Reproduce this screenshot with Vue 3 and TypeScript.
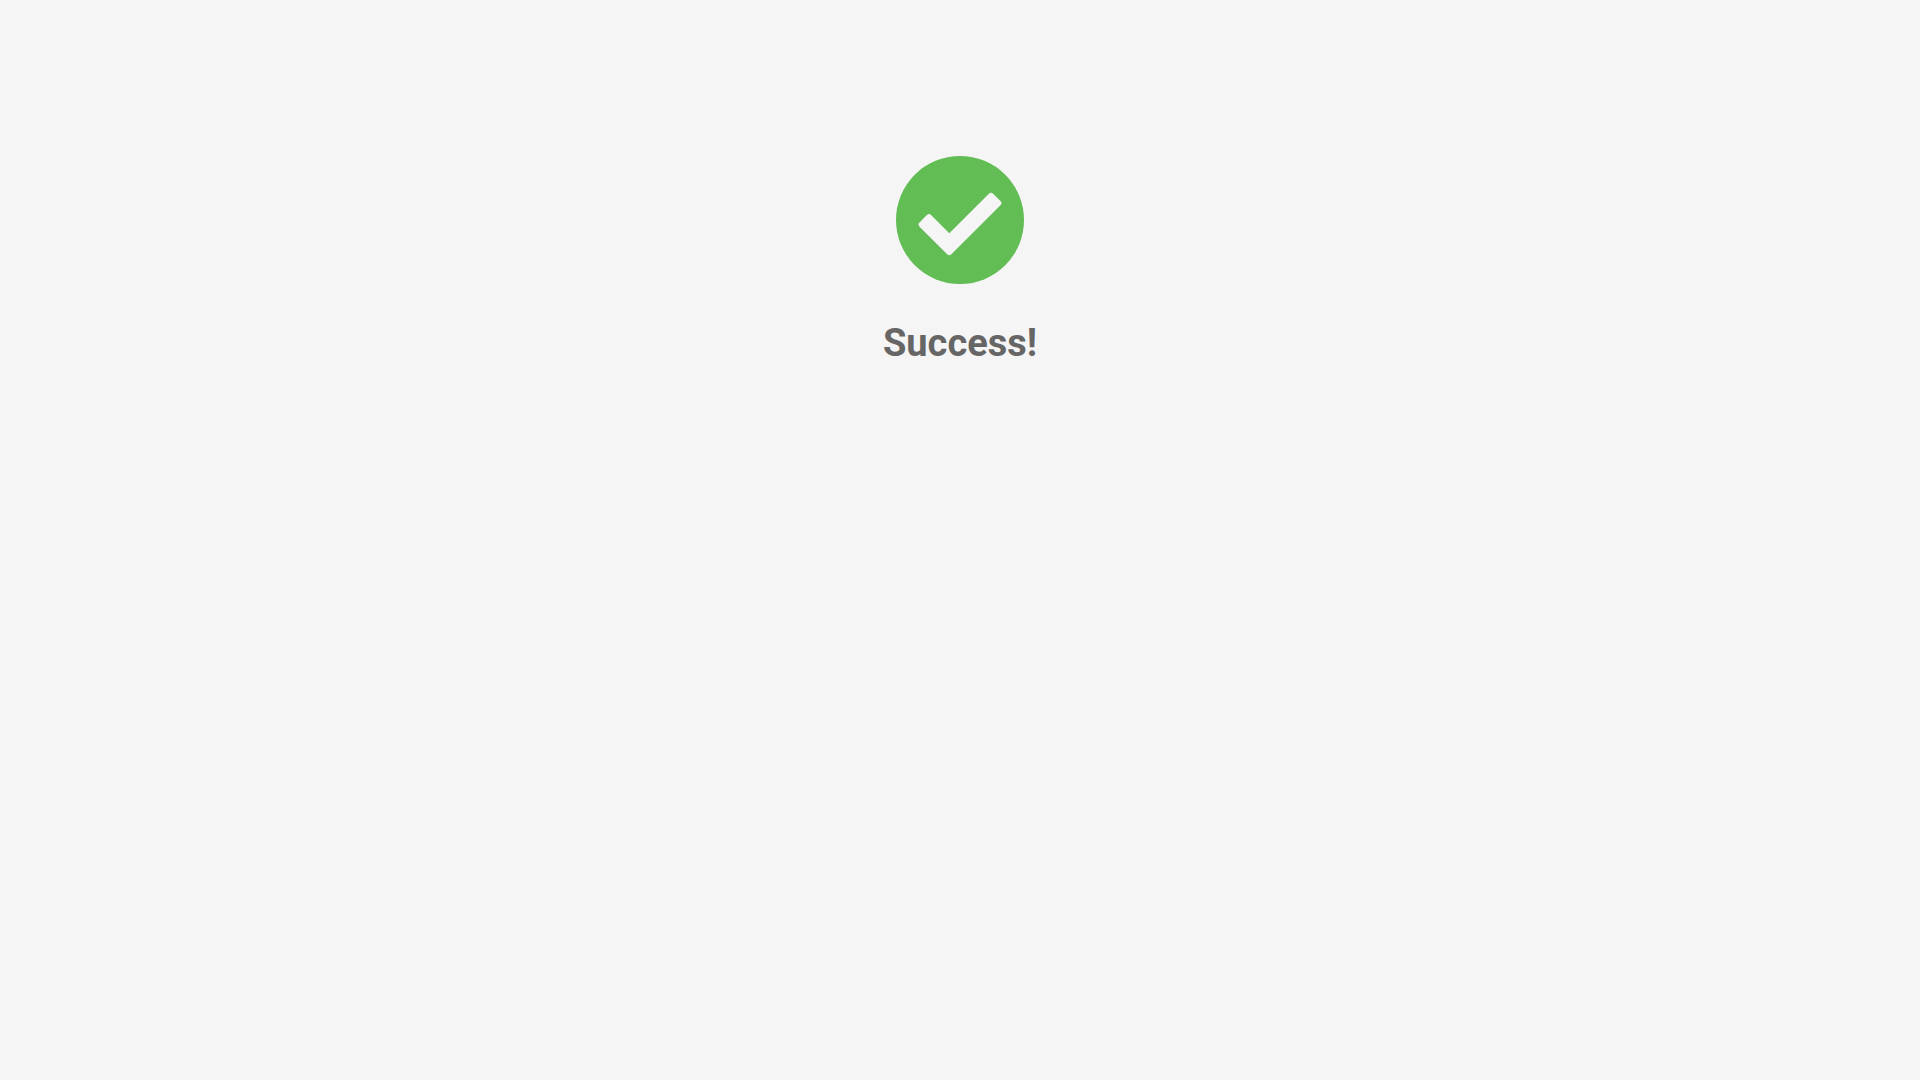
<script setup lang="ts">
const title: string = 'Success!'
</script>

<template>
  <main class="page">
    <svg class="icon" width="128" height="128" viewBox="0 0 128 128" aria-hidden="true">
      <circle cx="64" cy="64" r="64" fill="#62bd55" />
      <path
        d="M23.55 66.45 L30.9 59.1 Q33 57 35.1 59.1 L53.3 77.3 L92.9 37.7 Q95 35.6 97.1 37.7 L104.45 45.05 Q106.55 47.15 104.45 49.25 L55.4 98.3 Q53.3 100.4 51.2 98.3 L23.55 70.65 Q21.45 68.55 23.55 66.45 Z"
        fill="#f5f5f5"
      />
    </svg>
    <h1 class="title">{{ title }}</h1>
  </main>
</template>

<style scoped>
.page {
  min-height: 1080px;
  box-sizing: border-box;
  padding-top: 156px;
  background: #f5f5f5;
  display: flex;
  flex-direction: column;
  align-items: center;
}
.icon {
  display: block;
}
.title {
  margin: 36px 0 0;
  font-family: Roboto, "Liberation Sans", sans-serif;
  font-size: 38px;
  line-height: 46px;
  font-weight: 700;
  color: #666666;
}
</style>
